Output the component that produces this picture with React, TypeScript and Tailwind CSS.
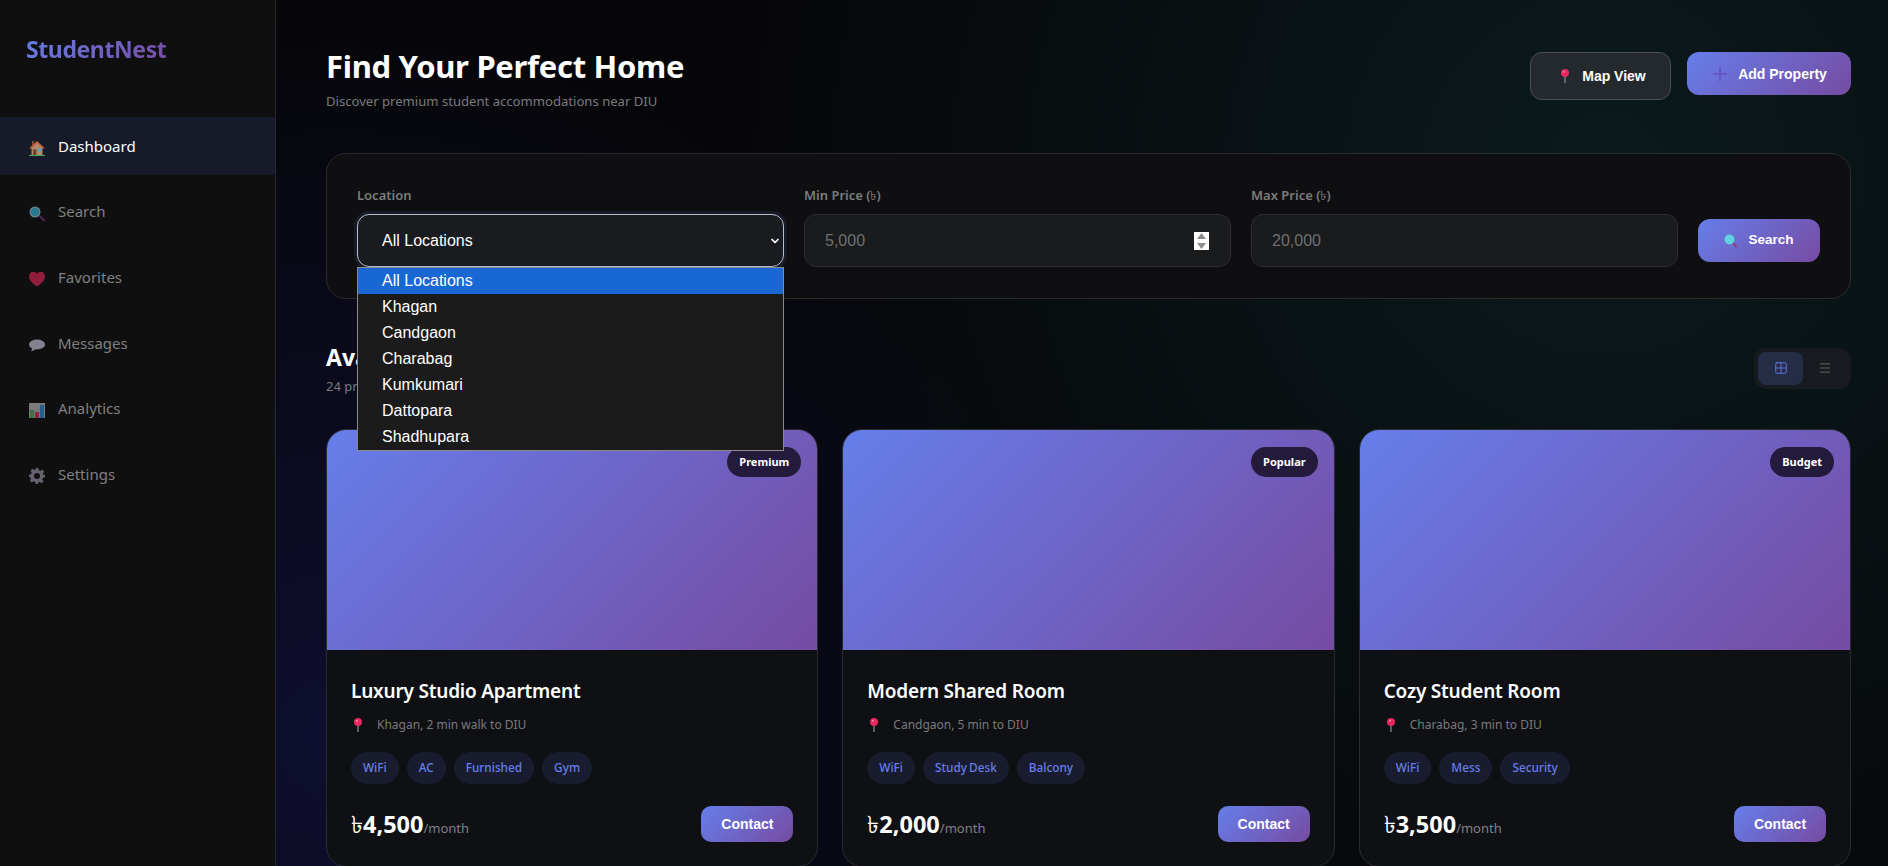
import { ChevronDown, Grid2x2, Menu } from 'lucide-react'

const navItems = [
  { label: 'Dashboard', icon: 'house', active: true },
  { label: 'Search', icon: 'search' },
  { label: 'Favorites', icon: 'heart' },
  { label: 'Messages', icon: 'bubble' },
  { label: 'Analytics', icon: 'chart' },
  { label: 'Settings', icon: 'gear' },
]

const locations = ['All Locations', 'Khagan', 'Candgaon', 'Charabag', 'Kumkumari', 'Dattopara', 'Shadhupara']

const properties = [
  { title: 'Luxury Studio Apartment', place: 'Khagan, 2 min walk to DIU', badge: 'Premium', price: '4,500', tags: ['WiFi', 'AC', 'Furnished', 'Gym'] },
  { title: 'Modern Shared Room', place: 'Candgaon, 5 min to DIU', badge: 'Popular', price: '2,000', tags: ['WiFi', 'Study Desk', 'Balcony'] },
  { title: 'Cozy Student Room', place: 'Charabag, 3 min to DIU', badge: 'Budget', price: '3,500', tags: ['WiFi', 'Mess', 'Security'] },
]

function NavIcon({ name }: { name: string }) {
  if (name === 'house') {
    return (
      <svg width="16" height="16" viewBox="0 0 16 16">
        <path d="M3 1h2v4H3z" fill="#7a4a3a" />
        <path d="M2.500 7 8 2.500 13.500 7v8h-11z" fill="#b08a68" />
        <path d="M0.500 8 8 1l7.500 7-1 1L8 3.400 1.500 9z" fill="#c9603f" />
        <path d="M4 9.500h3.500V15H4z" fill="#6b4630" />
        <path d="M9 8.500h3v3H9z" fill="#4aa5d8" />
        <path d="M0 15h16v1H0z" fill="#3fae5a" />
      </svg>
    )
  }
  if (name === 'search') {
    return (
      <svg width="16" height="16" viewBox="0 0 16 16">
        <path d="m9.500 10 1.300-1.300 4.800 4.800a1 1 0 0 1-1.400 1.600z" fill="#6b2f6e" />
        <circle cx="6" cy="6" r="5.500" fill="#9fb4bd" />
        <circle cx="6" cy="6" r="4.300" fill="#33a9c4" />
      </svg>
    )
  }
  if (name === 'heart') {
    return (
      <svg width="16" height="16" viewBox="0 0 16 16">
        <path d="M8 15.500C3 12 0 9 0 5.200 0 2.500 2 .8 4.200.8 5.800.8 7.200 1.700 8 3c.8-1.300 2.200-2.200 3.800-2.200C14 .8 16 2.500 16 5.200c0 3.800-3 6.800-8 10.300z" fill="#c9244f" />
      </svg>
    )
  }
  if (name === 'bubble') {
    return (
      <svg width="16" height="16" viewBox="0 0 16 16">
        <ellipse cx="8" cy="7.500" rx="8" ry="5" fill="#b8b2c4" />
        <path d="M3 10.500 2.500 14.500 7 12z" fill="#b8b2c4" />
      </svg>
    )
  }
  if (name === 'chart') {
    return (
      <svg width="16" height="16" viewBox="0 0 16 16">
        <path d="M0 1h16v15H0z" fill="#a8a8ac" />
        <path d="M1 8h4v8H1z" fill="#4fa060" />
        <path d="M6 10h4v6H6z" fill="#c4285a" />
        <path d="M11 3h4v13h-4z" fill="#2f7fc0" />
      </svg>
    )
  }
  return (
    <svg width="16" height="16" viewBox="0 0 24 24">
      <path
        fillRule="evenodd"
        d="M10 0h4l.7 3.300 2.300 1 2.900-1.800 2.800 2.800-1.800 2.900 1 2.300L24 10v4l-3.100.7-1 2.300 1.800 2.900-2.800 2.800-2.900-1.800-2.300 1L13.900 24h-4l-.7-3.100-2.300-1-2.900 1.800-2.800-2.800 1.800-2.900-1-2.300L0 14v-4l3.100-.7 1-2.300-1.800-2.900L5.100 1.300 8 3.100l2.300-1zM12 7.500a4.500 4.500 0 1 0 0 9 4.500 4.500 0 0 0 0-9z"
        fill="#8d8498"
      />
    </svg>
  )
}

function Pin({ size = 14 }: { size?: number }) {
  return (
    <svg width={size} height={size} viewBox="0 0 14 14">
      <path d="M6.400 6h1.200v8H6.400z" fill="#8a8f98" />
      <circle cx="7" cy="4" r="4" fill="#e8275f" />
      <circle cx="5.800" cy="2.800" r="1" fill="#f58aa8" />
    </svg>
  )
}

function SmallSearch() {
  return (
    <svg width="14" height="14" viewBox="0 0 14 14">
      <path d="m8.500 9 1-1 3.500 4.500-1 1z" fill="#a32a55" />
      <circle cx="5.500" cy="5.500" r="5" fill="#5fd3e0" />
    </svg>
  )
}

function Sidebar() {
  return (
    <aside className="w-[276px] h-full shrink-0 bg-[#0f0f10] border-r border-[#2a2a2e]">
      <div className="pl-[26px] pt-[33px] h-[117px]">
        <h1 className="text-[23px] tracking-[-0.4px] leading-[33px] font-bold w-fit text-transparent bg-clip-text bg-[linear-gradient(135deg,#667eea,#764ba2)]">StudentNest</h1>
      </div>
      <nav className="flex flex-col gap-[7.6px]">
        {navItems.map((item) => (
          <a
            key={item.label}
            className={`h-[58px] pl-[29px] flex items-center gap-[13px] text-[15px] ${item.active ? 'bg-[#171a28] text-white' : 'text-[#808080]'}`}
          >
            <span className={item.active ? 'mt-1' : 'mt-1 opacity-70'}>
              <NavIcon name={item.icon} />
            </span>
            <span>{item.label}</span>
          </a>
        ))}
      </nav>
    </aside>
  )
}

function SearchPanel() {
  return (
    <section className="mt-[44px] h-[146px] rounded-[20px] border border-[#2a2b2d] bg-[#0f0f11] px-[30px] pt-[32px] grid grid-cols-[1fr_1fr_1fr_122px] gap-5">
      <div className="relative">
        <label className="block text-[13px] leading-[18px] font-semibold text-[#7c7c7c] mb-[10px]">Location</label>
        <div className="relative h-[53px] rounded-xl border border-[#b9b9cf] bg-[#1a1b1e] shadow-[0_0_0_3px_rgba(102,126,234,0.1)] flex items-center pl-6 pr-[2px] font-['Liberation_Sans',sans-serif] text-base text-white">
          <span className="flex-1">All Locations</span>
          <ChevronDown size={12} strokeWidth={3.5} />
        </div>
        <ul className="absolute z-10 top-[81px] left-0 right-0 border border-[#8a8a8a] bg-[#1b1b1b] font-['Liberation_Sans',sans-serif] text-base text-white">
          {locations.map((loc, i) => (
            <li key={loc} className={`h-[26px] leading-[26px] pl-6 ${i === 0 ? 'bg-[#1967d2]' : ''}`}>{loc}</li>
          ))}
        </ul>
      </div>
      <div>
        <label className="block text-[13px] leading-[18px] font-semibold text-[#7c7c7c] mb-[10px]">
          Min Price (<span className="font-normal">৳</span>)
        </label>
        <div className="relative h-[53px] rounded-xl border border-[#2d2e31] bg-[#1a1b1d] flex items-center pl-5 font-['Liberation_Sans',sans-serif] text-base text-[#6f6f6f]">
          5,000
          <div className="absolute right-[21px] top-[17px] w-[15px] h-[18px] bg-white flex flex-col items-center justify-between py-[1px]">
            <svg width="9" height="6" viewBox="0 0 9 6"><path d="M4.500 0 9 6H0z" fill="#8c8c8c" /></svg>
            <svg width="9" height="6" viewBox="0 0 9 6"><path d="M4.500 6 9 0H0z" fill="#8c8c8c" /></svg>
          </div>
        </div>
      </div>
      <div>
        <label className="block text-[13px] leading-[18px] font-semibold text-[#7c7c7c] mb-[10px]">
          Max Price (<span className="font-normal">৳</span>)
        </label>
        <div className="h-[53px] rounded-xl border border-[#2d2e31] bg-[#1a1b1d] flex items-center pl-5 font-['Liberation_Sans',sans-serif] text-base text-[#6f6f6f]">
          20,000
        </div>
      </div>
      <button className="mt-[33px] h-[43px] rounded-xl bg-[linear-gradient(135deg,#667eea,#764ba2)] flex items-center justify-center gap-[10px] font-['Liberation_Sans',sans-serif] text-[13.5px] font-bold text-white">
        <SmallSearch />
        Search
      </button>
    </section>
  )
}

function PropertyCard({ item }: { item: (typeof properties)[number] }) {
  return (
    <article className="rounded-[20px] border border-[#2a2b2f] bg-[#0f1014] overflow-hidden">
      <div className="relative h-[220px] bg-[linear-gradient(135deg,#667eea,#764ba2)]">
        <span className="absolute top-[17px] right-4 h-[30px] px-3 rounded-full bg-[#241b3c] text-white text-[11px] font-bold flex items-center">
          {item.badge}
        </span>
      </div>
      <div className="p-6 pt-[27px]">
        <h3 className="text-[19px] tracking-[-0.2px] leading-[28px] font-semibold text-white">{item.title}</h3>
        <p className="mt-[11px] flex items-center gap-3 text-[12px] leading-[18px] text-[#7a7a7a]">
          <Pin />
          {item.place}
        </p>
        <div className="mt-[18px] flex gap-2">
          {item.tags.map((t) => (
            <span key={t} className="h-8 px-3 rounded-full bg-[#181c2e] text-[#667eea] text-[11.8px] font-medium [word-spacing:-1px] flex items-center">{t}</span>
          ))}
        </div>
        <div className="mt-[21px] flex items-center justify-between">
          <div className="mt-[2px] text-white text-[23.5px] font-bold">
            <span className="font-normal">৳</span>
            {item.price}
            <span className="text-[13px] font-normal text-[#808080]">/month</span>
          </div>
          <button className="w-[92px] h-9 rounded-[10px] bg-[linear-gradient(135deg,#667eea,#764ba2)] font-['Liberation_Sans',sans-serif] text-sm font-bold text-white">
            Contact
          </button>
        </div>
      </div>
    </article>
  )
}

export default function App() {
  return (
    <div className="flex h-[866px] overflow-hidden bg-[#060609] font-['Noto_Sans',sans-serif] bg-[radial-gradient(circle_at_18%_85%,rgba(40,40,170,0.24),transparent_42%),radial-gradient(circle_at_85%_20%,rgba(40,130,130,0.16),transparent_50%)]">
      <Sidebar />
      <main className="flex-1 min-w-0 pl-[50px] pr-[37px] pt-[43px]">
        <header className="flex items-start justify-between h-[66px]">
          <div>
            <h2 className="mt-px text-[31px] tracking-[-0.3px] leading-[44px] font-bold text-white">Find Your Perfect Home</h2>
            <p className="mt-1 text-[13.1px] leading-[18px] text-[#7a7a7a]">Discover premium student accommodations near DIU</p>
          </div>
          <div className="flex gap-4 mt-[9px] font-['Liberation_Sans',sans-serif] text-sm font-bold text-white">
            <button className="w-[141px] h-12 pl-[3px] rounded-xl border border-[#4a4f52] bg-[#23292c] flex items-center justify-center gap-[10px]">
              <Pin />
              Map View
            </button>
            <button className="w-[164px] h-[43px] pl-[2px] rounded-xl bg-[linear-gradient(135deg,#667eea,#764ba2)] flex items-center justify-center gap-[11px]">
              <svg width="14" height="14" viewBox="0 0 14 14"><path d="M7 0v14M0 7h14" stroke="#6150c4" strokeWidth="1.500" /></svg>
              Add Property
            </button>
          </div>
        </header>
        <SearchPanel />
        <div className="mt-[42px] flex items-center justify-between">
          <div>
            <h2 className="text-[23px] leading-[33px] font-bold text-white">Available Properties</h2>
            <p className="mt-[3px] text-[13px] leading-[18px] text-[#7a7a7a]">24 properties found</p>
          </div>
          <div className="w-[97px] h-[41px] p-1 rounded-xl bg-[#171b1f] flex">
            <div className="w-[45px] rounded-lg bg-[#252c45] flex items-center justify-center text-[#667eea]"><Grid2x2 size={14} strokeWidth={1.500} /></div>
            <div className="flex-1 flex items-center justify-center text-[#808080]"><Menu size={14} strokeWidth={1.250} /></div>
          </div>
        </div>
        <div className="mt-[34px] grid grid-cols-3 gap-6">
          {properties.map((p) => (
            <PropertyCard key={p.title} item={p} />
          ))}
        </div>
      </main>
    </div>
  )
}
